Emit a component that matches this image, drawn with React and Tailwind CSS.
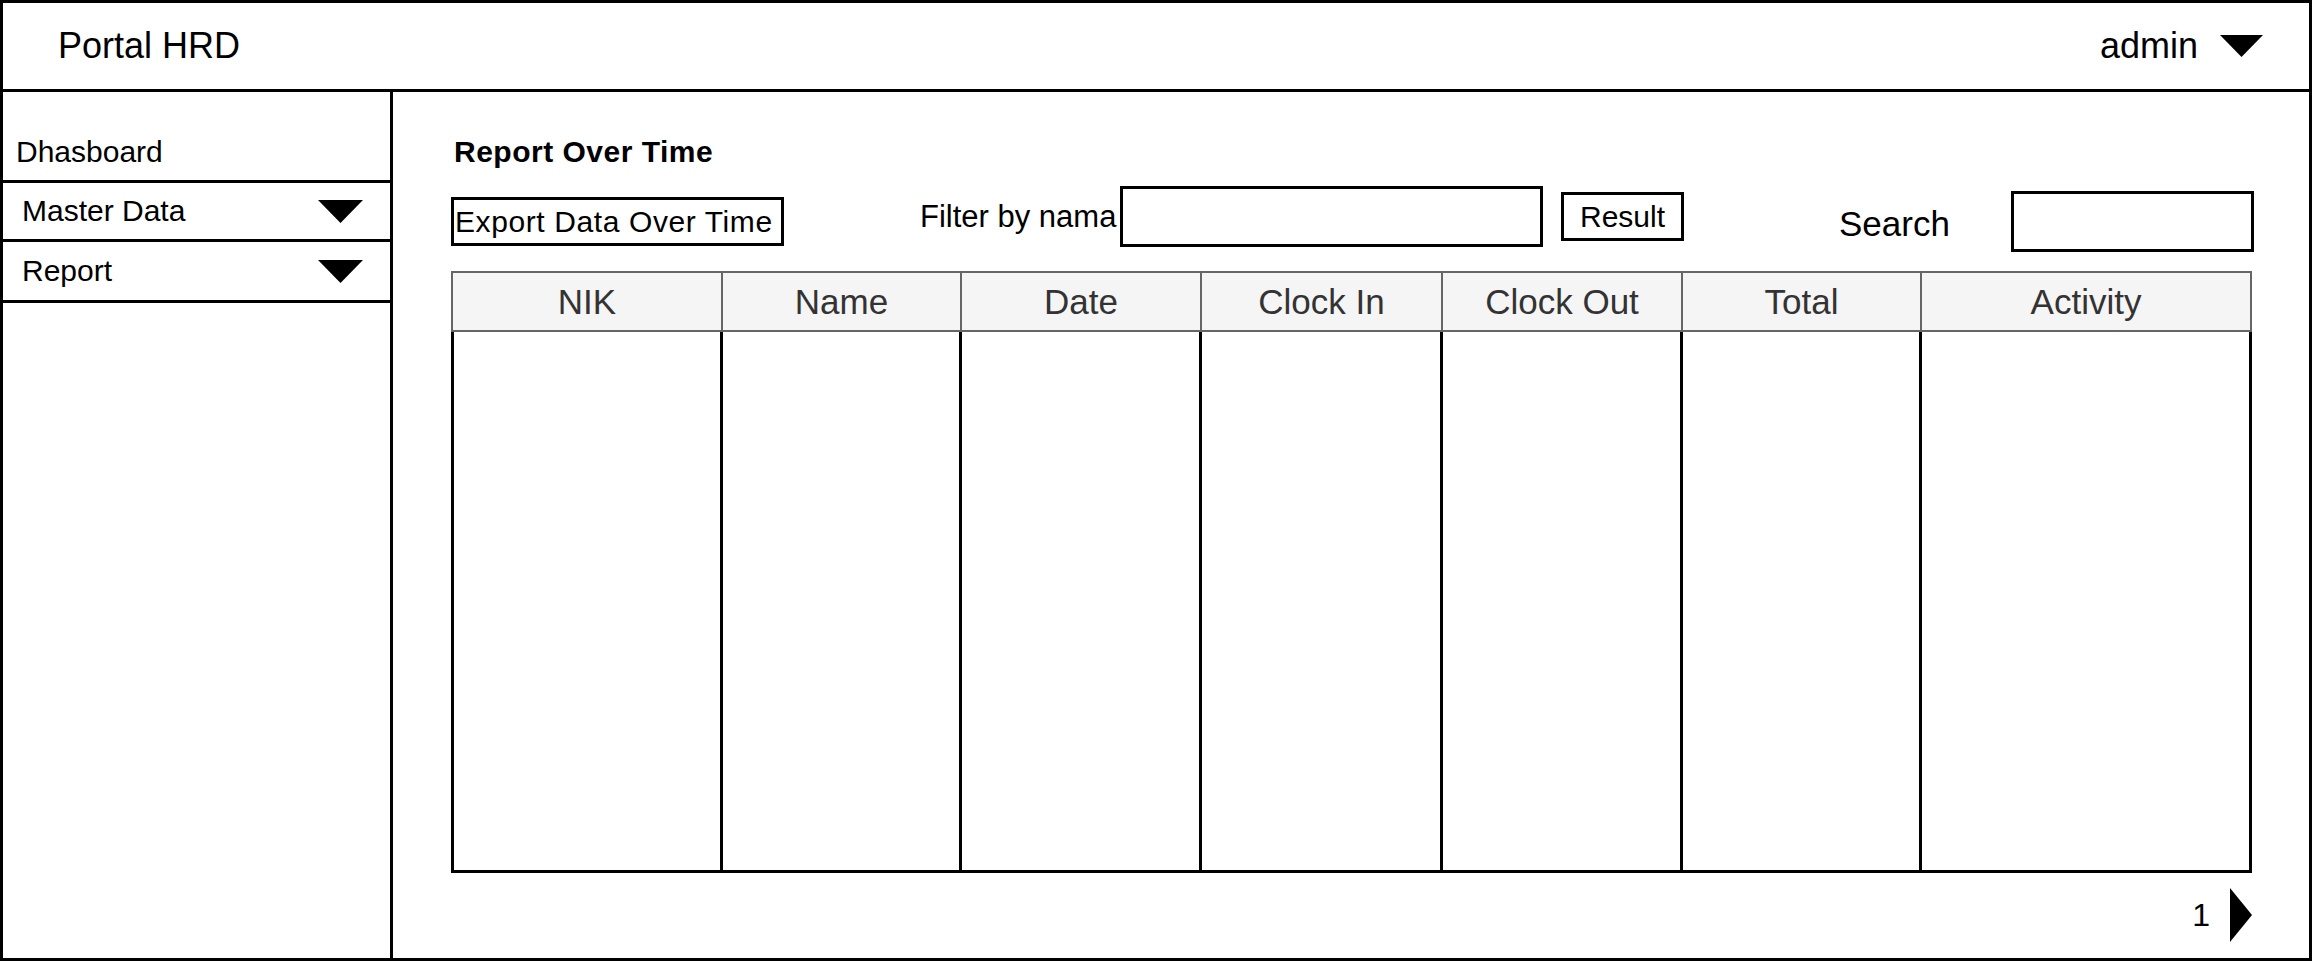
import React from 'react'

function DownTriangle({ w = 43, h = 22 }) {
  return (
    <svg width={w} height={h} viewBox={`0 0 ${w} ${h}`} className="block shrink-0">
      <polygon points={`0,0 ${w},0 ${w / 2},${h}`} fill="#000" />
    </svg>
  )
}

const columns = [
  { label: 'NIK', w: 'w-[270px]' },
  { label: 'Name', w: 'w-[239px]' },
  { label: 'Date', w: 'w-[240px]' },
  { label: 'Clock In', w: 'w-[241px]' },
  { label: 'Clock Out', w: 'w-[240px]' },
  { label: 'Total', w: 'w-[239px]' },
  { label: 'Activity', w: 'flex-1' },
]

function SideItem({ label, last }) {
  return (
    <div
      className={`flex items-center justify-between border-b-[3px] border-black pl-[19px] pr-[27px] ${
        last ? 'h-[61px]' : 'h-[59px]'
      }`}
    >
      <span className="text-[30px] leading-none text-black">{label}</span>
      <DownTriangle w={45} h={23} />
    </div>
  )
}

export default function App() {
  return (
    <div className="w-[2316px] h-[963px] bg-white font-['Liberation_Sans',Arial,sans-serif] text-black">
      <div className="flex h-[961px] w-[2312px] flex-col border-[3px] border-black">
        {/* top bar */}
        <header className="flex h-[89px] shrink-0 items-center justify-between border-b-[3px] border-black pl-[55px] pr-[46px]">
          <span className="text-[36px] leading-none">Portal HRD</span>
          <div className="flex items-center gap-[22px]">
            <span className="text-[36px] leading-none">admin</span>
            <DownTriangle w={43} h={22} />
          </div>
        </header>

        <div className="flex flex-1">
          {/* sidebar */}
          <aside className="w-[390px] shrink-0 border-r-[3px] border-black">
            <div className="h-[91px] border-b-[3px] border-black pl-[13px] pt-[45px]">
              <span className="text-[30px] leading-none">Dhasboard</span>
            </div>
            <SideItem label="Master Data" />
            <SideItem label="Report" last />
          </aside>

          {/* content */}
          <main className="flex flex-1 flex-col pl-[58px]">
            <h1 className="mt-[45px] pl-[3px] text-[30px] font-bold leading-none tracking-[0.5px]">
              Report Over Time
            </h1>

            <div className="mt-[19px] flex h-[66px] items-start">
              <button
                type="button"
                className="mt-[11px] flex h-[49px] w-[333px] items-center border-[3px] border-black pl-[1px] text-[30px] leading-none tracking-[0.6px] whitespace-nowrap"
              >
                Export Data Over Time
              </button>

              <div className="ml-[136px] flex h-[61px] items-center">
                <span className="w-[200px] text-[31px] leading-none whitespace-nowrap">Filter by nama</span>
                <div className="h-[61px] w-[423px] border-[3px] border-black" />
              </div>

              <button
                type="button"
                className="ml-[18px] mt-[6px] flex h-[49px] w-[123px] items-center justify-center border-[3px] border-black text-[30px] leading-none"
              >
                Result
              </button>

              <span className="ml-[155px] mt-[20px] text-[35px] leading-none">Search</span>
              <div className="ml-[61px] mt-[5px] h-[61px] w-[243px] border-[3px] border-black" />
            </div>

            {/* table */}
            <div className="mt-[19px] w-[1801px]">
              <div className="flex h-[61px] border-2 border-[#666] bg-[#f5f5f5]">
                {columns.map((c, i) => (
                  <div
                    key={c.label}
                    className={`${c.w} flex items-center justify-center text-[35px] leading-none text-[#333] ${
                      i < columns.length - 1 ? 'border-r-2 border-[#666]' : ''
                    }`}
                  >
                    {c.label}
                  </div>
                ))}
              </div>
              <div className="flex h-[541px] border-x-[3px] border-b-[3px] border-black">
                {columns.map((c, i) => (
                  <div
                    key={c.label}
                    className={`${i === 0 ? 'w-[269px]' : c.w} ${
                      i < columns.length - 1 ? 'border-r-[3px] border-black' : ''
                    }`}
                  />
                ))}
              </div>
            </div>

            {/* pagination */}
            <div className="mt-[15px] flex w-[1801px] items-center justify-end gap-[20px]">
              <span className="text-[32px] leading-none">1</span>
              <svg width="22" height="54" viewBox="0 0 22 54" className="block">
                <polygon points="0,0 22,27 0,54" fill="#000" />
              </svg>
            </div>
          </main>
        </div>
      </div>
    </div>
  )
}
